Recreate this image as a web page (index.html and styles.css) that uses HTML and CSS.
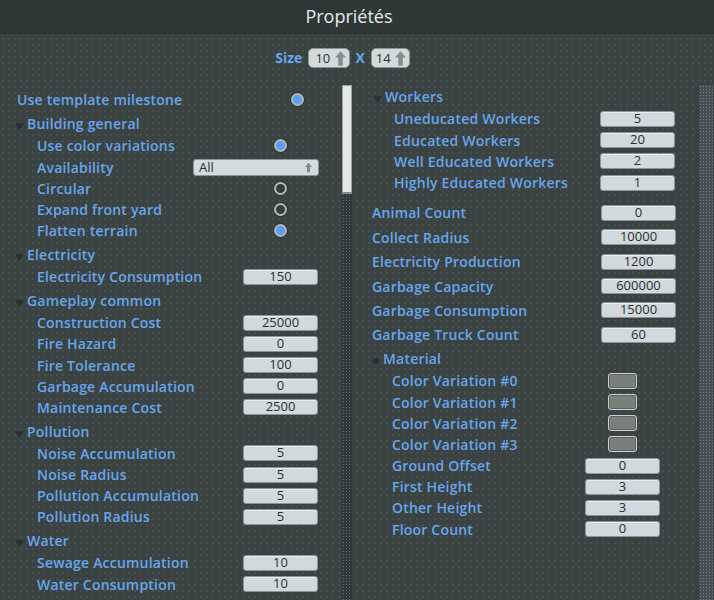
FILE: index.html
```html
<!DOCTYPE html>
<html lang="fr">
<head>
<meta charset="utf-8">
<title>Propriétés</title>
<link rel="stylesheet" href="styles.css">
</head>
<body>
<div class="window">
  <header class="titlebar">Propriétés</header>
  <div class="size-row">
    <span class="size-label">Size</span>
    <span class="spin"><span class="spin-val">10</span><svg class="up-arrow" viewBox="0 0 12 16"><path d="M6 0 L12 7 H8.5 V16 H3.5 V7 H0 Z"/></svg></span>
    <span class="size-x">X</span>
    <span class="spin"><span class="spin-val">14</span><svg class="up-arrow" viewBox="0 0 12 16"><path d="M6 0 L12 7 H8.5 V16 H3.5 V7 H0 Z"/></svg></span>
  </div>
  <div class="panels">
    <section class="panel panel-left">
      <div class="row"><span class="label">Use template milestone</span><span class="ctrl ctrl-top-left"><span class="radio on"></span></span></div>

      <div class="group">
        <div class="group-head"><svg class="caret" viewBox="0 0 10 7"><path d="M0 0 H10 L5 7 Z"/></svg><span>Building general</span></div>
        <div class="row child"><span class="label">Use color variations</span><span class="ctrl"><span class="radio on"></span></span></div>
        <div class="row child"><span class="label">Availability</span><span class="ctrl ctrl-select"><span class="select">All<svg class="select-arrow" viewBox="0 0 12 16"><path d="M6 0 L12 7 H8.5 V16 H3.5 V7 H0 Z"/></svg></span></span></div>
        <div class="row child"><span class="label">Circular</span><span class="ctrl"><span class="radio"></span></span></div>
        <div class="row child"><span class="label">Expand front yard</span><span class="ctrl"><span class="radio"></span></span></div>
        <div class="row child"><span class="label">Flatten terrain</span><span class="ctrl"><span class="radio on"></span></span></div>
      </div>

      <div class="group">
        <div class="group-head"><svg class="caret" viewBox="0 0 10 7"><path d="M0 0 H10 L5 7 Z"/></svg><span>Electricity</span></div>
        <div class="row child"><span class="label">Electricity Consumption</span><span class="ctrl"><span class="field">150</span></span></div>
      </div>

      <div class="group">
        <div class="group-head"><svg class="caret" viewBox="0 0 10 7"><path d="M0 0 H10 L5 7 Z"/></svg><span>Gameplay common</span></div>
        <div class="row child"><span class="label">Construction Cost</span><span class="ctrl"><span class="field">25000</span></span></div>
        <div class="row child"><span class="label">Fire Hazard</span><span class="ctrl"><span class="field">0</span></span></div>
        <div class="row child"><span class="label">Fire Tolerance</span><span class="ctrl"><span class="field">100</span></span></div>
        <div class="row child"><span class="label">Garbage Accumulation</span><span class="ctrl"><span class="field">0</span></span></div>
        <div class="row child"><span class="label">Maintenance Cost</span><span class="ctrl"><span class="field">2500</span></span></div>
      </div>

      <div class="group">
        <div class="group-head"><svg class="caret" viewBox="0 0 10 7"><path d="M0 0 H10 L5 7 Z"/></svg><span>Pollution</span></div>
        <div class="row child"><span class="label">Noise Accumulation</span><span class="ctrl"><span class="field">5</span></span></div>
        <div class="row child"><span class="label">Noise Radius</span><span class="ctrl"><span class="field">5</span></span></div>
        <div class="row child"><span class="label">Pollution Accumulation</span><span class="ctrl"><span class="field">5</span></span></div>
        <div class="row child"><span class="label">Pollution Radius</span><span class="ctrl"><span class="field">5</span></span></div>
      </div>

      <div class="group">
        <div class="group-head"><svg class="caret" viewBox="0 0 10 7"><path d="M0 0 H10 L5 7 Z"/></svg><span>Water</span></div>
        <div class="row child"><span class="label">Sewage Accumulation</span><span class="ctrl"><span class="field">10</span></span></div>
        <div class="row child"><span class="label">Water Consumption</span><span class="ctrl"><span class="field">10</span></span></div>
      </div>
    </section>

    <div class="scroll scroll-left"><div class="thumb"></div></div>

    <section class="panel panel-right">
      <div class="group group-workers">
        <div class="group-head"><svg class="caret" viewBox="0 0 10 7"><path d="M0 0 H10 L5 7 Z"/></svg><span>Workers</span></div>
        <div class="row child"><span class="label">Uneducated Workers</span><span class="ctrl"><span class="field">5</span></span></div>
        <div class="row child"><span class="label">Educated Workers</span><span class="ctrl"><span class="field">20</span></span></div>
        <div class="row child"><span class="label">Well Educated Workers</span><span class="ctrl"><span class="field">2</span></span></div>
        <div class="row child"><span class="label">Highly Educated Workers</span><span class="ctrl"><span class="field">1</span></span></div>
      </div>

      <div class="row top"><span class="label">Animal Count</span><span class="ctrl"><span class="field">0</span></span></div>
      <div class="row top"><span class="label">Collect Radius</span><span class="ctrl"><span class="field">10000</span></span></div>
      <div class="row top"><span class="label">Electricity Production</span><span class="ctrl"><span class="field">1200</span></span></div>
      <div class="row top"><span class="label">Garbage Capacity</span><span class="ctrl"><span class="field">600000</span></span></div>
      <div class="row top"><span class="label">Garbage Consumption</span><span class="ctrl"><span class="field">15000</span></span></div>
      <div class="row top"><span class="label">Garbage Truck Count</span><span class="ctrl"><span class="field">60</span></span></div>

      <div class="group group-material">
        <div class="group-head"><svg class="caret dot" viewBox="0 0 10 7"><ellipse cx="5" cy="3.5" rx="4" ry="3.5"/></svg><span>Material</span></div>
        <div class="row child"><span class="label">Color Variation #0</span><span class="ctrl"><span class="swatch"></span></span></div>
        <div class="row child"><span class="label">Color Variation #1</span><span class="ctrl"><span class="swatch"></span></span></div>
        <div class="row child"><span class="label">Color Variation #2</span><span class="ctrl"><span class="swatch"></span></span></div>
        <div class="row child"><span class="label">Color Variation #3</span><span class="ctrl"><span class="swatch"></span></span></div>
        <div class="row child"><span class="label">Ground Offset</span><span class="ctrl"><span class="field">0</span></span></div>
        <div class="row child"><span class="label">First Height</span><span class="ctrl"><span class="field">3</span></span></div>
        <div class="row child"><span class="label">Other Height</span><span class="ctrl"><span class="field">3</span></span></div>
        <div class="row child"><span class="label">Floor Count</span><span class="ctrl"><span class="field">0</span></span></div>
      </div>
    </section>

    <div class="scroll scroll-right"></div>
  </div>
</div>
</body>
</html>
```

FILE: styles.css
```css
* { box-sizing: border-box; }

html, body {
  margin: 0;
  padding: 0;
  height: 100%;
}

body {
  background-color: #3a4242;
  background-image: radial-gradient(circle, rgba(255,255,255,0.07) 0.7px, transparent 1px);
  background-size: 6px 6px;
  font-family: "Open Sans", "Noto Sans", sans-serif;
  color: #69a6ec;
  overflow: hidden;
}

.window {
  width: 714px;
  height: 600px;
  display: flex;
  flex-direction: column;
}

.titlebar {
  height: 34px;
  flex: none;
  padding-right: 16px;
  background-color: #2f3636;
  background-image: radial-gradient(circle, rgba(255,255,255,0.05) 0.7px, transparent 1px);
  background-size: 5px 5px;
  border-bottom: 1px solid #293030;
  color: #e6eaea;
  font-size: 18px;
  line-height: 33px;
  text-align: center;
}

/* size row */
.size-row {
  flex: none;
  display: flex;
  justify-content: center;
  align-items: flex-start;
  padding-right: 29px;
  padding-top: 14px;
  height: 51px;
}

.size-label, .size-x {
  font-weight: 700;
  font-size: 14px;
  line-height: 20px;
  color: #69a6ec;
}

.size-label { margin-right: 6px; }
.size-x { margin: 0 6px 0 5px; }

.spin {
  display: flex;
  align-items: center;
  height: 20px;
  width: 42px;
  padding: 0 3px 0 6px;
  background: #d2dada;
  border: 1px solid #8c9696;
  border-radius: 5px;
  font-size: 13px;
  color: #2b3030;
}

.spin + .size-x + .spin { width: 39px; padding-left: 4px; }

.spin-val { flex: 1; }

.up-arrow {
  width: 11px;
  height: 15px;
  fill: #868d8d;
}

/* panels */
.panels {
  flex: 1;
  display: flex;
  min-height: 0;
  overflow: hidden;
}

.panel {
  display: flex;
  flex-direction: column;
}

.panel-left {
  width: 342px;
  flex: none;
  padding-top: 4.4px;
}

.panel-right {
  flex: 1;
  padding-top: 0.6px;
}

.scroll {
  flex: none;
  background-color: #30383a;
  background-image: radial-gradient(circle, rgba(200,210,215,0.35) 0.6px, transparent 0.9px);
  background-size: 3px 3px;
}

.scroll-left {
  width: 10px;
}

.thumb {
  height: 109px;
  background: #e3e7e7;
  border: 1px solid #9aa2a2;
  border-bottom: 2px solid #7f8888;
}

.scroll-right {
  width: 15px;
  margin-right: 1px;
  background-color: #474f56;
  background-image: radial-gradient(circle, rgba(210,220,225,0.35) 0.6px, transparent 0.9px);
  background-size: 3px 3px;
  border-left: 1px solid #3c4448;
}

/* rows */
.row {
  display: flex;
  align-items: center;
  height: 21.2px;
  font-weight: 600;
  font-size: 14px;
  letter-spacing: 0.2px;
}

.row .label { flex: 1; white-space: nowrap; }

.panel-left .row { padding-left: 17px; }
.panel-left .row.child { padding-left: 37px; }
.panel-right .row.top { padding-left: 20px; height: 24.4px; }
.group-workers .row.child { padding-left: 42px; }
.group-material .row.child { padding-left: 40px; }

.group { margin-top: 2px; }
.group-workers { margin-top: 0; margin-bottom: 7.6px; }
.group-material { margin-top: 0.4px; }

.group-head {
  display: flex;
  align-items: center;
  height: 22.8px;
  font-weight: 600;
  font-size: 14px;
  letter-spacing: 0.2px;
  padding-left: 15px;
}

.panel-right .group-head { padding-left: 21px; }
.group-material .group-head { padding-left: 20px; }

.caret {
  width: 9px;
  height: 7px;
  margin-right: 3px;
  margin-top: 6px;
  fill: #2a3031;
}

.caret.dot { width: 8px; height: 8px; margin-top: 4px; }

/* controls */
.ctrl {
  flex: none;
  width: 75px;
  margin-right: 24px;
  display: flex;
  justify-content: center;
  align-items: center;
  letter-spacing: 0;
}

.ctrl-top-left { margin-right: 7px; }
.ctrl-select { width: 126px; margin-right: 23px; }

.panel-right .ctrl { margin-right: 23px; }
.panel-right .row.top .ctrl { margin-right: 22px; }
.group-material .ctrl { margin-right: 38px; }

.field {
  display: block;
  width: 75px;
  height: 16px;
  background: #d1d9dc;
  border: 1px solid #8a9597;
  border-radius: 3px;
  box-shadow: inset 0 1px 0 #e7eef0;
  font-family: "Open Sans", "Noto Sans", sans-serif;
  font-weight: 400;
  font-size: 13px;
  line-height: 13px;
  color: #2a2f31;
  text-align: center;
}

.select {
  display: flex;
  align-items: center;
  width: 126px;
  height: 17px;
  padding: 0 6px 0 5px;
  background: #d3dbdd;
  border: 1px solid #8a9597;
  border-radius: 3px;
  font-weight: 400;
  font-size: 13px;
  color: #2a2f31;
  justify-content: space-between;
}

.select-arrow {
  width: 7px;
  height: 11px;
  fill: #838a8a;
}

.radio {
  display: block;
  width: 13px;
  height: 13px;
  border-radius: 50%;
  border: 2px solid #b3bbbb;
  background: #353c3c;
  box-shadow: 0 0 0 1px #2e3434;
}

.radio.on {
  background: #5c9df2;
  border-color: #aeb7b9;
}

.swatch {
  display: block;
  width: 29px;
  height: 16px;
  background: #7a7f7b;
  border: 1px solid #c6d0dc;
  border-radius: 3px;
  box-shadow: inset 0 0 0 1px #5e6360;
}
```
